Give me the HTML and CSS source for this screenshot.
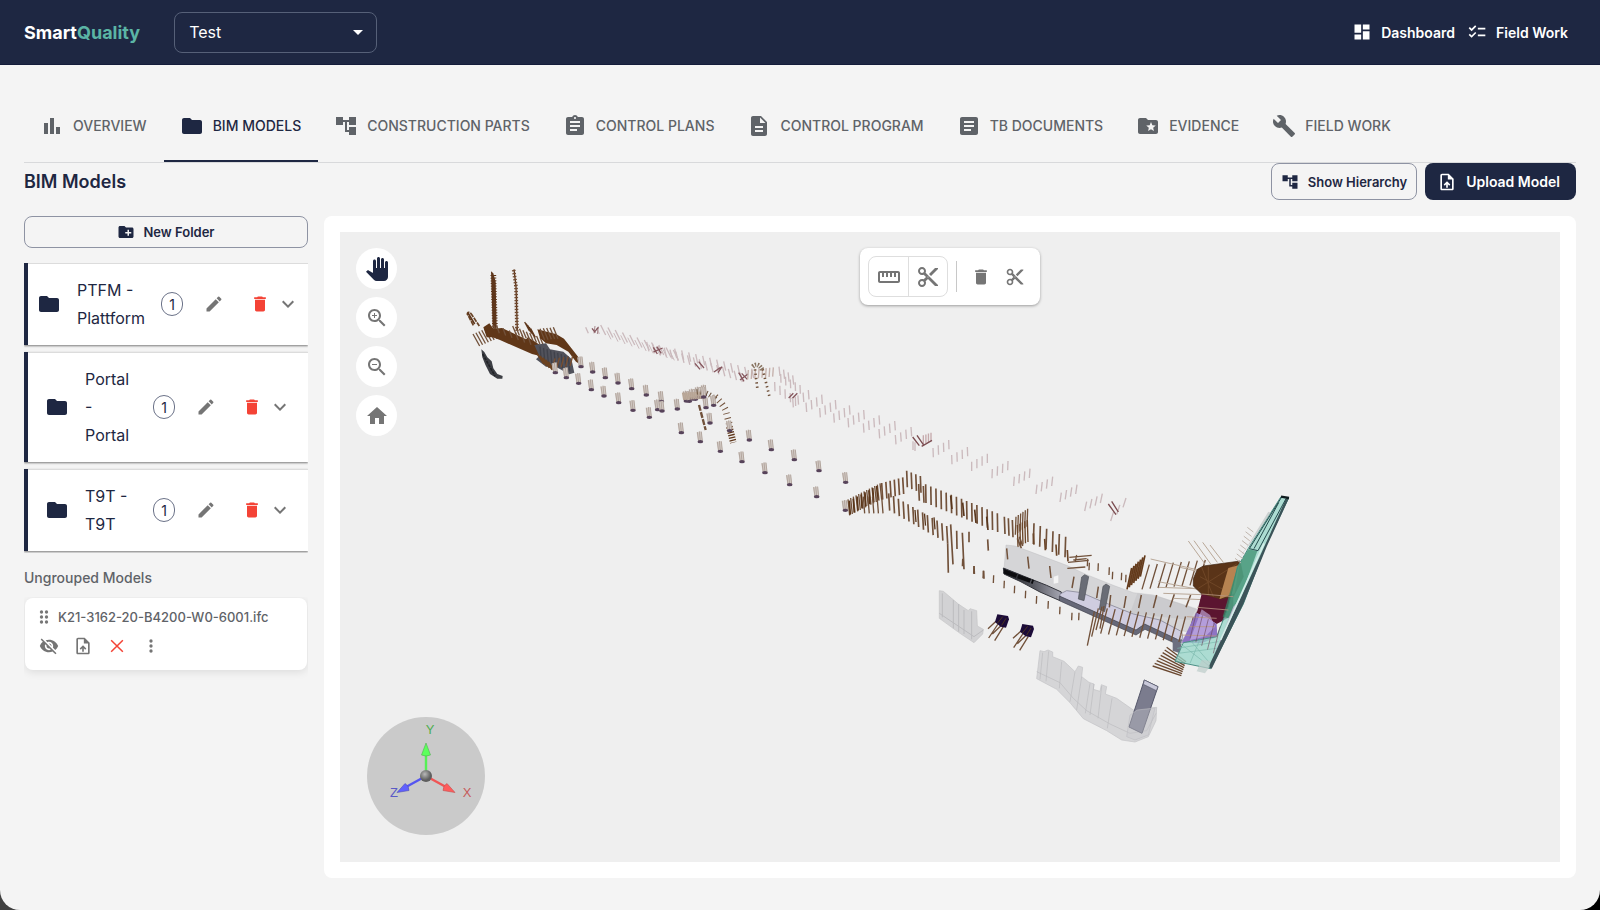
FILE: index.html
```html
<!DOCTYPE html>
<html lang="en">
<head>
<meta charset="utf-8">
<meta name="viewport" content="width=device-width, initial-scale=1">
<title>SmartQuality – BIM Models</title>
<link rel="stylesheet" href="styles.css">
</head>
<body>
<svg class="sprite" aria-hidden="true">
  <symbol id="i-bars" viewBox="0 0 24 24"><path d="M4 9h4v11H4zM16 13h4v7h-4zM10 4h4v16h-4z"/></symbol>
  <symbol id="i-folder" viewBox="0 0 24 24"><path d="M10 4H4c-1.1 0-1.99.9-1.99 2L2 18c0 1.1.9 2 2 2h16c1.1 0 2-.9 2-2V8c0-1.1-.9-2-2-2h-8z"/></symbol>
  <symbol id="i-tree" viewBox="0 0 24 24"><path d="M22 11V3h-7v3H9V3H2v8h7V8h2v10h4v3h7v-8h-7v3h-2V8h2v3z"/></symbol>
  <symbol id="i-assign" viewBox="0 0 24 24"><path d="M19 3h-4.18C14.4 1.84 13.3 1 12 1c-1.3 0-2.4.84-2.82 2H5c-1.1 0-2 .9-2 2v14c0 1.1.9 2 2 2h14c1.1 0 2-.9 2-2V5c0-1.1-.9-2-2-2m-7 0c.55 0 1 .45 1 1s-.45 1-1 1-1-.45-1-1 .45-1 1-1m2 14H7v-2h7zm3-4H7v-2h10zm0-4H7V7h10z"/></symbol>
  <symbol id="i-doc" viewBox="0 0 24 24"><path d="M14 2H6c-1.1 0-1.99.9-1.99 2L4 20c0 1.1.89 2 1.99 2H18c1.1 0 2-.9 2-2V8zm2 16H8v-2h8zm0-4H8v-2h8zm-3-5V3.5L18.5 9z"/></symbol>
  <symbol id="i-article" viewBox="0 0 24 24"><path d="M19 3H5c-1.1 0-2 .9-2 2v14c0 1.1.9 2 2 2h14c1.1 0 2-.9 2-2V5c0-1.1-.9-2-2-2m-5 14H7v-2h7zm3-4H7v-2h10zm0-4H7V7h10z"/></symbol>
  <symbol id="i-star" viewBox="0 0 24 24"><path d="M20 6h-8l-2-2H4c-1.1 0-1.99.9-1.99 2L2 18c0 1.1.9 2 2 2h16c1.1 0 2-.9 2-2V8c0-1.1-.9-2-2-2m-2.06 11L15 15.28 12.06 17l.78-3.33-2.59-2.24 3.41-.29L15 8l1.34 3.14 3.41.29-2.59 2.24z"/></symbol>
  <symbol id="i-build" viewBox="0 0 24 24"><path d="m22.7 19-9.1-9.1c.9-2.3.4-5-1.5-6.9-2-2-5-2.4-7.4-1.3L9 6 6 9 1.6 4.7C.4 7.1.9 10.1 2.9 12.1c1.9 1.9 4.6 2.4 6.9 1.5l9.1 9.1c.4.4 1 .4 1.4 0l2.3-2.3c.5-.4.5-1.1.1-1.4"/></symbol>
  <symbol id="i-dash" viewBox="0 0 24 24"><path d="M3 13h8V3H3zm0 8h8v-6H3zm10 0h8V11h-8zm0-18v6h8V3z"/></symbol>
  <symbol id="i-check" viewBox="0 0 24 24"><path d="M22 7h-9v2h9zm0 8h-9v2h9zM5.54 11 2 7.46l1.41-1.41 2.12 2.12 4.24-4.24 1.41 1.41zm0 8L2 15.46l1.41-1.41 2.12 2.12 4.24-4.24 1.41 1.41z"/></symbol>
  <symbol id="i-upload" viewBox="0 0 24 24"><path d="M14 2H6c-1.1 0-1.99.9-1.99 2L4 20c0 1.1.89 2 1.99 2H18c1.1 0 2-.9 2-2V8zm4 18H6V4h7v5h5zM8 15.01l1.41 1.41L11 14.84V19h2v-4.16l1.59 1.59L16 15.01 12.01 11z"/></symbol>
  <symbol id="i-newfolder" viewBox="0 0 24 24"><path d="M20 6h-8l-2-2H4c-1.11 0-1.99.89-1.99 2L2 18c0 1.11.89 2 2 2h16c1.11 0 2-.89 2-2V8c0-1.11-.89-2-2-2m-1 8h-3v3h-2v-3h-3v-2h3V9h2v3h3z"/></symbol>
  <symbol id="i-edit" viewBox="0 0 24 24"><path d="M3 17.25V21h3.75L17.81 9.94l-3.75-3.75zM20.71 7.04c.39-.39.39-1.02 0-1.41l-2.34-2.34a.996.996 0 0 0-1.41 0l-1.83 1.83 3.75 3.75z"/></symbol>
  <symbol id="i-delete" viewBox="0 0 24 24"><path d="M6 19c0 1.1.9 2 2 2h8c1.1 0 2-.9 2-2V7H6zM19 4h-3.5l-1-1h-5l-1 1H5v2h14z"/></symbol>
  <symbol id="i-more" viewBox="0 0 24 24"><path d="M16.59 8.59 12 13.17 7.41 8.59 6 10l6 6 6-6z"/></symbol>
  <symbol id="i-drag" viewBox="0 0 24 24"><circle cx="9" cy="6" r="2"/><circle cx="9" cy="12" r="2"/><circle cx="9" cy="18" r="2"/><circle cx="15" cy="6" r="2"/><circle cx="15" cy="12" r="2"/><circle cx="15" cy="18" r="2"/></symbol>
  <symbol id="i-hidden" viewBox="0 0 24 24"><path d="M12 7c2.76 0 5 2.24 5 5 0 .65-.13 1.26-.36 1.83l2.92 2.92c1.51-1.26 2.7-2.89 3.43-4.75-1.73-4.39-6-7.5-11-7.5-1.4 0-2.74.25-3.98.7l2.16 2.16C10.74 7.13 11.35 7 12 7M2 4.27l2.28 2.28.46.46C3.08 8.3 1.78 10.02 1 12c1.73 4.39 6 7.5 11 7.5 1.55 0 3.03-.3 4.38-.84l.42.42L19.73 22 21 20.73 3.27 3zM7.53 9.8l1.55 1.55c-.05.21-.08.43-.08.65 0 1.66 1.34 3 3 3 .22 0 .44-.03.65-.08l1.55 1.55c-.67.33-1.41.53-2.2.53-2.76 0-5-2.24-5-5 0-.79.2-1.53.53-2.2m4.31-.78 3.15 3.15.02-.16c0-1.66-1.34-3-3-3z"/></symbol>
  <symbol id="i-close" viewBox="0 0 24 24"><path d="M5 5l14 14M19 5L5 19" fill="none" stroke="currentColor" stroke-width="1.8"/></symbol>
  <symbol id="i-dots" viewBox="0 0 24 24"><circle cx="12" cy="6" r="2"/><circle cx="12" cy="12" r="2"/><circle cx="12" cy="18" r="2"/></symbol>
  <symbol id="i-hand" viewBox="0 0 24 24"><path d="M23 5.5V20c0 2.2-1.8 4-4 4h-7.3c-1.08 0-2.1-.43-2.85-1.19L1 14.83s1.26-1.23 1.3-1.25c.22-.19.49-.29.79-.29.22 0 .42.06.6.16.04.01 4.31 2.46 4.31 2.46V4c0-.83.67-1.5 1.5-1.5S11 3.17 11 4v7h1V1.5c0-.83.67-1.5 1.5-1.5S15 .67 15 1.5V11h1V2.5c0-.83.67-1.5 1.5-1.5s1.5.67 1.5 1.5V11h1V5.5c0-.83.67-1.5 1.5-1.5s1.5.67 1.5 1.5"/></symbol>
  <symbol id="i-zoomin" viewBox="0 0 24 24"><path d="M15.5 14h-.79l-.28-.27C15.41 12.59 16 11.11 16 9.5 16 5.91 13.09 3 9.5 3S3 5.91 3 9.5 5.91 16 9.5 16c1.61 0 3.09-.59 4.23-1.57l.27.28v.79l5 4.99L20.49 19zm-6 0C7.01 14 5 11.99 5 9.5S7.01 5 9.5 5 14 7.01 14 9.5 11.99 14 9.5 14M12 10h-2v2H9v-2H7V9h2V7h1v2h2z"/></symbol>
  <symbol id="i-zoomout" viewBox="0 0 24 24"><path d="M15.5 14h-.79l-.28-.27C15.41 12.59 16 11.11 16 9.5 16 5.91 13.09 3 9.5 3S3 5.91 3 9.5 5.91 16 9.5 16c1.61 0 3.09-.59 4.23-1.57l.27.28v.79l5 4.99L20.49 19zm-6 0C7.01 14 5 11.99 5 9.5S7.01 5 9.5 5 14 7.01 14 9.5 11.99 14 9.5 14M7 9h5v1H7z"/></symbol>
  <symbol id="i-home" viewBox="0 0 24 24"><path d="M10 20v-6h4v6h5v-8h3L12 3 2 12h3v8z"/></symbol>
  <symbol id="i-ruler" viewBox="0 0 24 24"><path d="M21 6H3c-1.1 0-2 .9-2 2v8c0 1.1.9 2 2 2h18c1.1 0 2-.9 2-2V8c0-1.1-.9-2-2-2m0 10H3V8h2v4h2V8h2v4h2V8h2v4h2V8h2v4h2V8h2z"/></symbol>
  <symbol id="i-cut" viewBox="0 0 24 24"><path d="M9.64 7.64c.23-.5.36-1.05.36-1.64 0-2.21-1.79-4-4-4S2 3.79 2 6s1.79 4 4 4c.59 0 1.14-.13 1.64-.36L10 12l-2.36 2.36C7.14 14.13 6.59 14 6 14c-2.21 0-4 1.79-4 4s1.79 4 4 4 4-1.79 4-4c0-.59-.13-1.14-.36-1.64L12 14l7 7h3v-1zM6 8c-1.1 0-2-.89-2-2s.9-2 2-2 2 .89 2 2-.9 2-2 2m0 12c-1.1 0-2-.89-2-2s.9-2 2-2 2 .89 2 2-.9 2-2 2m6-7.5c-.28 0-.5-.22-.5-.5s.22-.5.5-.5.5.22.5.5-.22.5-.5.5M19 3l-6 6 2 2 7-7V3z"/></symbol>
</svg>

<div class="window">
<header class="topbar">
  <a class="brand" href="#">Smart<span class="brand-accent">Quality</span></a>
  <div class="project">
    <select class="project-select" aria-label="Project"><option>Test</option></select>
    <svg class="project-arrow" viewBox="0 0 10 5" aria-hidden="true"><path d="M0 0l5 5 5-5z"/></svg>
  </div>
  <nav class="topnav">
    <a class="topnav-link" href="#"><svg class="icon s20"><use href="#i-dash"/></svg>Dashboard</a>
    <a class="topnav-link" href="#"><svg class="icon s20"><use href="#i-check"/></svg>Field Work</a>
  </nav>
</header>

<main class="page">
  <nav class="tabs">
    <a class="tab" href="#"><svg class="icon s24"><use href="#i-bars"/></svg>OVERVIEW</a>
    <a class="tab tab-active" href="#" aria-current="page"><svg class="icon s24"><use href="#i-folder"/></svg>BIM MODELS</a>
    <a class="tab" href="#"><svg class="icon s24"><use href="#i-tree"/></svg>CONSTRUCTION PARTS</a>
    <a class="tab" href="#"><svg class="icon s24"><use href="#i-assign"/></svg>CONTROL PLANS</a>
    <a class="tab" href="#"><svg class="icon s24"><use href="#i-doc"/></svg>CONTROL PROGRAM</a>
    <a class="tab" href="#"><svg class="icon s24"><use href="#i-article"/></svg>TB DOCUMENTS</a>
    <a class="tab" href="#"><svg class="icon s24"><use href="#i-star"/></svg>EVIDENCE</a>
    <a class="tab" href="#"><svg class="icon s24"><use href="#i-build"/></svg>FIELD WORK</a>
  </nav>

  <div class="heading">
    <h1 class="title">BIM Models</h1>
    <button class="btn btn-outline" type="button"><svg class="icon s18"><use href="#i-tree"/></svg>Show Hierarchy</button>
    <button class="btn btn-solid" type="button"><svg class="icon s20"><use href="#i-upload"/></svg>Upload Model</button>
  </div>

  <div class="workspace">
    <aside class="sidebar">
      <button class="new-folder" type="button"><svg class="icon s18"><use href="#i-newfolder"/></svg>New Folder</button>
      <div class="folders">
        <section class="folder">
          <svg class="icon s24"><use href="#i-folder"/></svg>
          <span class="folder-name">PTFM - Plattform</span>
          <span class="count">1</span>
          <button class="tool grey" type="button" aria-label="Rename folder"><svg class="icon s20"><use href="#i-edit"/></svg></button>
          <span class="folder-end"><button class="tool red" type="button" aria-label="Delete folder"><svg class="icon s20"><use href="#i-delete"/></svg></button><button class="toggle grey" type="button" aria-label="Expand folder"><svg class="icon s24"><use href="#i-more"/></svg></button></span>
        </section>
        <section class="folder">
          <svg class="icon s24"><use href="#i-folder"/></svg>
          <span class="folder-name">Portal - Portal</span>
          <span class="count">1</span>
          <button class="tool grey" type="button" aria-label="Rename folder"><svg class="icon s20"><use href="#i-edit"/></svg></button>
          <span class="folder-end"><button class="tool red" type="button" aria-label="Delete folder"><svg class="icon s20"><use href="#i-delete"/></svg></button><button class="toggle grey" type="button" aria-label="Expand folder"><svg class="icon s24"><use href="#i-more"/></svg></button></span>
        </section>
        <section class="folder">
          <svg class="icon s24"><use href="#i-folder"/></svg>
          <span class="folder-name">T9T - T9T</span>
          <span class="count">1</span>
          <button class="tool grey" type="button" aria-label="Rename folder"><svg class="icon s20"><use href="#i-edit"/></svg></button>
          <span class="folder-end"><button class="tool red" type="button" aria-label="Delete folder"><svg class="icon s20"><use href="#i-delete"/></svg></button><button class="toggle grey" type="button" aria-label="Expand folder"><svg class="icon s24"><use href="#i-more"/></svg></button></span>
        </section>
      </div>
      <h2 class="subtitle">Ungrouped Models</h2>
      <div class="clip">
        <article class="model">
          <div class="model-name"><svg class="icon s20 grey"><use href="#i-drag"/></svg>K21-3162-20-B4200-W0-6001.ifc</div>
          <div class="model-tools">
            <button class="mini grey" type="button" aria-label="Hide model"><svg class="icon s20"><use href="#i-hidden"/></svg></button>
            <button class="mini grey" type="button" aria-label="Upload new version"><svg class="icon s20"><use href="#i-upload"/></svg></button>
            <button class="mini red" type="button" aria-label="Remove model"><svg class="icon s20"><use href="#i-close"/></svg></button>
            <button class="mini grey" type="button" aria-label="More actions"><svg class="icon s20"><use href="#i-dots"/></svg></button>
          </div>
        </article>
      </div>
    </aside>

    <section class="viewer">
      <div class="canvas">
        <svg class="scene" id="scene" viewBox="340 232 1220 630" role="img" aria-label="3D model view"></svg>
        <div class="view-tools">
          <button class="round navy" type="button" aria-label="Pan"><svg class="icon s24"><use href="#i-hand"/></svg></button>
          <button class="round grey" type="button" aria-label="Zoom in"><svg class="icon s24"><use href="#i-zoomin"/></svg></button>
          <button class="round grey" type="button" aria-label="Zoom out"><svg class="icon s24"><use href="#i-zoomout"/></svg></button>
          <button class="round grey" type="button" aria-label="Home view"><svg class="icon s24"><use href="#i-home"/></svg></button>
        </div>
        <div class="toolbar">
          <div class="toolgroup">
            <button class="groupbtn grey" type="button" aria-label="Measure"><svg class="icon s24"><use href="#i-ruler"/></svg></button>
            <button class="groupbtn grey" type="button" aria-label="Section"><svg class="icon s24"><use href="#i-cut"/></svg></button>
          </div>
          <span class="divider"></span>
          <button class="barbtn grey" type="button" aria-label="Delete measurements"><svg class="icon s20"><use href="#i-delete"/></svg></button>
          <button class="barbtn grey" type="button" aria-label="Delete sections"><svg class="icon s20"><use href="#i-cut"/></svg></button>
        </div>
        <svg class="gizmo" viewBox="0 0 120 120" role="img" aria-label="Axes">
          <defs><radialGradient id="ball" cx=".4" cy=".35"><stop offset="0" stop-color="#b8b8b8"/><stop offset="1" stop-color="#5e5e5e"/></radialGradient></defs>
          <circle cx="60" cy="60" r="59" fill="#cacaca"/>
          <g stroke-width="2.4" stroke-linecap="round"><path d="M60 60V40" stroke="#55f055"/><path d="M60 60l20 11" stroke="#f05555"/><path d="M60 60l-20 11" stroke="#5555f0"/></g>
          <path d="M60 27l4.500 12q-4.500 2-9 0z" fill="#5cff5c" stroke="#50b050" stroke-width=".6"/>
          <path d="M89 76.500l-12-2q0-5 4-7z" fill="#ff5c5c" stroke="#c05050" stroke-width=".6"/>
          <path d="M31 76.500l12-2q0-5-4-7z" fill="#6060ff" stroke="#5050b0" stroke-width=".6"/>
          <circle cx="60" cy="60" r="6" fill="url(#ball)"/>
          <text class="axis axis-y" x="64" y="18">Y</text>
          <text class="axis axis-x" x="101" y="81">X</text>
          <text class="axis axis-z" x="28" y="81">Z</text>
        </svg>
      </div>
    </section>
  </div>
</main>
</div>
<script src="scene.js"></script>
</body>
</html>
```

FILE: styles.css
```css
* { box-sizing: border-box; }
html { background: linear-gradient(90deg, #404040 50%, #000 50%); }
body { margin: 0; font-family: Inter, "Liberation Sans", sans-serif; color: #1e2742; }
button, select { font-family: inherit; color: inherit; }
button { border: 0; background: none; padding: 0; cursor: pointer; }
a { color: inherit; text-decoration: none; }
.sprite { display: none; }
.icon { display: block; flex: none; fill: currentColor; }
.s18 { width: 18px; height: 18px; }
.s20 { width: 20px; height: 20px; }
.s24 { width: 24px; height: 24px; }
.grey { color: #757575; }
.red { color: #f44336; }
.navy { color: #1e2742; }

.window { min-height: 100vh; display: flex; flex-direction: column; background: #f4f4f4; border-radius: 0 0 20px 20px; overflow: hidden; }

.topbar { display: flex; align-items: center; height: 65px; padding: 0 32px 0 24px; background: #1e2742; border-bottom: 1px solid #141c3a; color: #fff; }
.brand { font-size: 18px; font-weight: 700; margin-right: 34px; }
.brand-accent { color: #5bb5a5; }
.project { display: grid; align-items: center; }
.project-select { grid-area: 1 / 1; appearance: none; width: 203px; height: 41px; padding: 0 14px; border: 1px solid #566078; border-radius: 8px; background: transparent; color: #fff; font-size: 16px; }
.project-arrow { grid-area: 1 / 1; justify-self: end; width: 10px; height: 5px; margin-right: 14px; fill: #fff; pointer-events: none; }
.topnav { display: flex; gap: 12px; margin-left: auto; }
.topnav-link { display: flex; align-items: center; gap: 9px; font-size: 14px; font-weight: 600; }

.page { flex: 1; display: flex; flex-direction: column; padding: 24px 24px 32px; }
.tabs { display: flex; border-bottom: 1px solid #d8d9db; }
.tab { display: flex; align-items: center; gap: 9px; height: 73px; padding: 0 17px 0 16px; color: #5f6368; font-size: 14px; font-weight: 500; white-space: nowrap; }
.tab-active { color: #1e2742; box-shadow: inset 0 -2px 0 #1e2742; }

.heading { display: flex; align-items: center; gap: 8px; margin-bottom: 16px; }
.title { flex: 1; margin: 0; font-size: 18px; font-weight: 600; }
.btn { display: flex; align-items: center; gap: 9px; height: 37px; border-radius: 8px; font-weight: 600; }
.btn-outline { padding: 0 9px; border: 1px solid #8e93a3; font-size: 13px; }
.btn-solid { padding: 0 16px 0 12px; background: #1e2742; color: #fff; font-size: 14px; }

.workspace { flex: 1; display: flex; gap: 16px; }
.sidebar { width: 284px; flex: none; display: flex; flex-direction: column; }
.new-folder { display: flex; align-items: center; justify-content: center; gap: 8px; height: 32px; border: 1px solid #8e93a3; border-radius: 8px; font-size: 13px; font-weight: 600; }
.folders { display: grid; grid-template-columns: minmax(0, 1fr); gap: 7px; margin-top: 15px; overflow: hidden; padding-bottom: 2px; }
.folder { display: flex; align-items: center; justify-content: center; gap: 16px; padding: 13px 15px 13px 17px; border-left: 4px solid #1e2742; background: #fff; box-shadow: 0 1px 2px rgba(0, 0, 0, .5), inset 0 1px 0 #dcdcdc; }
.folder-name { flex: 1 1 0; font-size: 16px; line-height: 28px; }
.folder-end { display: flex; align-items: center; }
.count { display: grid; place-items: center; flex: none; width: 22px; height: 24px; border: 1px solid #6b7288; border-radius: 12px; font-size: 14px; }
.tool { display: grid; place-items: center; flex: none; width: 30px; height: 30px; }
.toggle { display: grid; place-items: center; flex: none; width: 26px; height: 30px; }
.subtitle { margin: 15px 0 9px; font-size: 14px; line-height: 20px; font-weight: 500; color: #5f6368; }
.clip { overflow: hidden; padding: 1px 1px 12px; }
.model { padding: 8px 10px 12px; border-radius: 8px; background: #fff; box-shadow: 0 2px 8px rgba(0, 0, 0, .1); }
.model-name { display: flex; align-items: center; gap: 4px; height: 22px; margin-left: -1px; font-size: 13px; font-weight: 500; color: #5f6368; }
.model-tools { display: flex; gap: 6px; margin-top: 6px; }
.mini { display: grid; place-items: center; width: 28px; height: 24px; }

.viewer { flex: 1; display: flex; padding: 16px; border-radius: 8px; background: #fff; }
.canvas { flex: 1; position: relative; background: #efefef; overflow: hidden; }
.scene { position: absolute; inset: 0; width: 100%; height: 100%; }
.view-tools { position: absolute; left: 16px; top: 16px; display: grid; gap: 8px; }
.round { display: grid; place-items: center; width: 41px; height: 41px; border-radius: 50%; background: #fff; }
.toolbar { position: absolute; top: 16px; left: 50%; transform: translateX(-50%); display: flex; align-items: center; height: 57px; padding: 8px; border-radius: 8px; background: #fff; box-shadow: 0 1px 3px rgba(0, 0, 0, .35); }
.toolgroup { display: flex; border: 1px solid #dedede; border-radius: 8px; }
.groupbtn { display: grid; place-items: center; width: 39px; height: 39px; }
.groupbtn + .groupbtn { border-left: 1px solid #dedede; }
.divider { width: 1px; height: 31px; margin: 0 7px 0 8px; background: #c8c8c8; }
.barbtn { display: grid; place-items: center; width: 34px; height: 34px; }
.gizmo { position: absolute; left: 26px; bottom: 26px; width: 120px; height: 120px; }
.axis { font-family: "Liberation Sans", sans-serif; font-size: 13px; text-anchor: middle; }
.axis-y { fill: #4fae4f; }
.axis-x { fill: #c65a5a; }
.axis-z { fill: #5a5ac6; }
```

FILE: scene.js
```js
const scene = document.getElementById('scene');
const NS = 'http://www.w3.org/2000/svg';
const BROWN = '#71513a';
const PINK = '#cbbabd';

function el(parent, name, attrs) {
  const node = document.createElementNS(NS, name);
  for (const key in attrs) node.setAttribute(key, attrs[key]);
  parent.appendChild(node);
  return node;
}

// Each area is drawn on a grid three times finer than the view.
function area(x, y) {
  return el(scene, 'g', { transform: `translate(${x} ${y}) scale(${1 / 3})` });
}
function poly(g, points, fill, stroke, width) {
  return el(g, 'polygon', { points, fill, stroke: stroke || 'none', 'stroke-width': width || 2, 'stroke-linejoin': 'round' });
}
function line(g, d, stroke, width, dash) {
  return el(g, 'path', { d, fill: 'none', stroke, 'stroke-width': width, 'stroke-dasharray': dash || 'none' });
}
// A row of n sticks whose tops run from a to b.
function row(g, ax, ay, bx, by, n, dx, dy, color, width) {
  let d = '';
  for (let i = 0; i < n; i++) {
    const t = n > 1 ? i / (n - 1) : 0;
    d += `M${ax + (bx - ax) * t} ${ay + (by - ay) * t}l${dx} ${dy}`;
  }
  line(g, d, color, width);
}
function sticks(g, list, color, width) {
  line(g, list.map(([a, b, c, e]) => `M${a} ${b}L${c} ${e}`).join(''), color, width);
}
// Pile group with a dark cap at its foot.
function pile(g, x, y) {
  y -= 2;
  poly(g, `${x - 10},${y - 30} ${x + 4},${y - 34} ${x + 8},${y - 4} ${x - 6},${y - 4}`, '#d3cbc6');
  line(g, `M${x - 8} ${y - 32}L${x - 4} ${y - 4}M${x - 2} ${y - 34}L${x + 1} ${y - 4}M${x + 4} ${y - 33}L${x + 7} ${y - 4}`, '#b3a69e', 3);
  el(g, 'ellipse', { cx: x + 1, cy: y - 3, rx: 8.5, ry: 5, fill: '#57435a' });
}

/* ---- west area ---- */
const w = area(440, 250);
poly(w, '153,64 160,70 167,95 170,236 158,236 155,130', '#5e361b');
line(w, 'M160 75L165 235', '#5e361b', 17, '3 5');
line(w, 'M222 58L228 110L232 240', '#5e361b', 4);
line(w, 'M221 60L228 110L231 242', '#70492f', 11, '4 5');
line(w, 'M100 226L82 192Q84 182 94 192L118 228', '#684225', 5, '14 3');
line(w, 'M104 222L84 189', '#5e361b', 5);
row(w, 99, 252, 160, 226, 8, 20, 36, BROWN, 4);
poly(w, '130,232 148,220 160,236 186,234 258,268 264,262 305,288 330,345 345,360 325,352 300,318 276,312 180,270 158,262 140,262', '#603718');
row(w, 170, 228, 265, 262, 6, 8, 22, BROWN, 4);
row(w, 218, 228, 300, 262, 9, 10, 24, BROWN, 4);
row(w, 254, 216, 272, 236, 5, 14, 26, '#5e361b', 4);
poly(w, '292,238 320,245 348,252 372,266 392,292 420,328 424,345 408,335 385,305 350,285 318,280 300,264', '#603718');
row(w, 300, 236, 340, 232, 5, 14, 34, BROWN, 4);
poly(w, '283,285 318,280 330,298 370,305 394,326 403,368 388,373 350,352 318,350 288,328 298,318', '#51525b');
row(w, 300, 290, 385, 320, 9, 4, 44, '#40424b', 4);
row(w, 292, 312, 325, 335, 5, 20, 30, '#6b4220', 5);
row(w, 345, 325, 398, 318, 5, -8, 30, '#7a4f30', 4);
poly(w, '124,298 133,306 142,322 155,334 160,355 172,372 188,378 187,386 172,386 150,372 136,344 127,322', '#3c3e44');
line(w, 'M128 312L165 378', '#202226', 5, '9 3');

row(w, 437, 232, 470, 234, 2, 8, 18, PINK, 4);
row(w, 482, 225, 700, 300, 11, 15, 30, PINK, 4);
row(w, 465, 228, 475, 230, 2, -3, 22, '#a98a8e', 3);
row(w, 500, 242, 690, 305, 10, 13, 26, PINK, 3);
row(w, 620, 276, 900, 368, 17, 7, 28, PINK, 4);
row(w, 704, 296, 935, 356, 12, 6, 28, PINK, 4);
sticks(w, [[456, 235, 466, 248], [475, 232, 465, 244], [640, 292, 652, 312], [650, 290, 664, 310], [668, 294, 640, 306], [765, 340, 780, 358], [776, 335, 792, 354], [822, 366, 842, 352], [834, 368, 846, 350], [896, 368, 912, 394], [905, 370, 922, 388], [900, 390, 924, 372]], '#85565d', 4);
row(w, 925, 360, 1000, 352, 8, -2, 28, '#c5b0ab', 4);
row(w, 1017, 350, 1058, 376, 4, 3, 28, PINK, 4);
row(w, 1004, 396, 1066, 440, 5, 1, 28, PINK, 4);
row(w, 1022, 372, 1080, 405, 5, 1, 26, PINK, 4);
sticks(w, [[1046, 444, 1060, 430], [1056, 446, 1072, 430]], '#85565d', 4);
line(w, 'M938 350Q955 335 968 362', '#87725f', 14, '4 4');
line(w, 'M945 358L952 415', BROWN, 8, '4 9');
line(w, 'M968 358L988 438', BROWN, 8, '4 9');

for (let i = 0; i < 7; i++) pile(w, 738 + i * 9, 458 - i * 3 + (i % 2) * 4);
row(w, 728, 428, 790, 424, 12, 4, 22, '#b8a595', 5);
line(w, 'M770 426Q800 422 826 448', '#6a533e', 16, '3 7');
line(w, 'M826 440Q848 462 856 478L870 530', BROWN, 20, '3 12');
line(w, 'M868 530L880 578', '#5e361b', 20, '4 4');
line(w, 'M777 465L797 540', BROWN, 7, '18 4');
[[345, 373], [378, 388], [415, 405], [453, 424], [491, 443], [535, 463], [578, 486], [627, 507], [723, 553], [780, 580], [840, 609], [905, 640], [974, 673], [1048, 709], [1129, 745], [1215, 786],
 [422, 355], [457, 371], [495, 388], [533, 404], [574, 421], [618, 440], [663, 459], [711, 482], [652, 484], [665, 488], [797, 478], [820, 471], [809, 524], [868, 547], [790, 446], [927, 575], [993, 604], [1062, 634], [1136, 667], [1216, 702]].forEach(([x, y]) => pile(w, x, y));

/* ---- middle area ---- */
const m = area(780, 330);
[[38, 204, 0], [78, 218, 0], [119, 234, 0], [161, 250, 0], [204, 264, 0], [250, 280, 0], [297, 297, 0], [346, 315, 0], [458, 354, 1], [514, 375, 1], [573, 395, 2], [634, 417, 3], [699, 440, 4], [766, 464, 5], [838, 488, 6], [912, 515, 8]].forEach(([x, y, lean]) => {
  row(m, x + lean, y, x + lean + 47, y - 24, 4, 2 - lean, 28, PINK, 4);
});
row(m, 399, 334, 405, 337, 2, 0, 26, PINK, 4);
row(m, 430, 316, 453, 308, 4, 0, 26, '#c5a9ab', 4);
row(m, 1001, 545, 1038, 504, 3, -9, 28, PINK, 4);
sticks(m, [[398, 321, 418, 347], [411, 316, 430, 344], [425, 349, 456, 331], [985, 522, 1008, 554], [995, 514, 1015, 546]], '#7b4c50', 4);

row(m, 204, 508, 300, 460, 13, 5, 48, BROWN, 4);
row(m, 208, 512, 290, 468, 8, 3, 42, '#5a3518', 5);
row(m, 250, 500, 305, 500, 5, 4, 50, BROWN, 4);
row(m, 305, 459, 368, 442, 6, 3, 50, '#735038', 5);
row(m, 380, 422, 421, 438, 4, 2, 50, BROWN, 5);
row(m, 416, 462, 430, 468, 2, 2, 50, BROWN, 5);
row(m, 437, 463, 652, 550, 15, 1, 56, BROWN, 5);
row(m, 326, 490, 500, 588, 13, 3, 52, BROWN, 5);
row(m, 512, 497, 620, 560, 4, 4, 40, '#59361c', 5);
row(m, 405, 540, 462, 562, 3, 3, 36, '#59361c', 4);
row(m, 673, 560, 697, 570, 3, 2, 52, BROWN, 5);
row(m, 708, 560, 743, 536, 6, -2, 54, BROWN, 4);
row(m, 712, 585, 742, 570, 5, 2, 66, '#6b4528', 4);
row(m, 762, 580, 857, 620, 6, -2, 62, BROWN, 5);
row(m, 760, 610, 862, 660, 4, 2, 34, '#6b4528', 5);
sticks(m, [[503, 640, 505, 728], [512, 583, 519, 703], [530, 602, 531, 657], [547, 608, 552, 718], [567, 605, 567, 637], [623, 628, 625, 662], [582, 708, 583, 732], [611, 722, 612, 746], [712, 625, 724, 655], [718, 620, 728, 648]], BROWN, 5);

/* ---- east area ---- */
const e = area(900, 480);
const defs = el(scene, 'defs', {});
const grad = el(defs, 'linearGradient', { id: 'slab', x1: 0, x2: 1 });
el(grad, 'stop', { offset: 0, 'stop-color': '#16171b' });
el(grad, 'stop', { offset: .5, 'stop-color': '#55565e' });
el(grad, 'stop', { offset: 1, 'stop-color': '#a5a6b2' });

poly(e, '318,195 345,198 500,256 560,284 640,316 700,338 760,345 890,388 885,460 740,432 620,388 470,340 312,268', 'rgba(204,204,207,.75)', 'rgba(180,180,184,.5)');
poly(e, '690,400 712,340 780,350 890,385 870,420 780,410', 'rgba(185,185,190,.35)');
poly(e, '461,290 475,286 475,308 461,311', '#f4f4f4');
poly(e, '310,264 370,288 440,316 484,336 480,362 420,336 360,304 312,282', 'url(#slab)', '#34353c', 3);
line(e, 'M312 274L400 306', '#0d0d10', 12, '40 4');
poly(e, '480,342 500,332 545,338 600,362 700,402 780,420 845,455 850,482 830,480 732,434 708,452 480,350', '#cfcde0', '#77778a', 2);
poly(e, '478,348 708,450 734,432 832,478 830,492 735,448 708,465 478,362', '#666878', '#3e404c', 2);
poly(e, '818,480 846,478 840,520 818,512', '#6c6f80');
poly(e, '545,291 554,284 566,290 552,362 535,357', '#6a6d76', '#4f5158');
poly(e, '609,319 618,312 629,319 614,395 598,388', '#6a6d76', '#4f5158');

sticks(e, [[320, 205, 323, 238], [383, 230, 387, 266], [449, 258, 453, 294], [522, 290, 516, 324], [595, 320, 590, 354], [632, 345, 628, 382], [678, 348, 672, 384], [724, 345, 716, 384], [770, 345, 760, 384], [823, 343, 810, 382], [872, 345, 858, 382]], BROWN, 4.5);
[[188, 236], [222, 258], [250, 272], [281, 286], [313, 302], [344, 317], [377, 332], [410, 348], [445, 363], [480, 380], [516, 398], [537, 398], [563, 236], [595, 250], [628, 262], [638, 275], [665, 278], [678, 284], [568, 248]].forEach(([x, y]) => line(e, `M${x} ${y}l-1 23`, BROWN, 4));
sticks(e, [[508, 232, 575, 226], [520, 240, 560, 236], [504, 247, 566, 241], [502, 265, 556, 261], [530, 225, 526, 244]], BROWN, 4);
row(e, 735, 226, 695, 264, 7, -14, 64, '#633a1b', 5);
row(e, 748, 254, 916, 240, 8, -22, 74, BROWN, 4);
sticks(e, [[583, 395, 562, 497], [595, 385, 575, 470], [606, 380, 588, 450], [612, 378, 600, 446]], BROWN, 4);
row(e, 622, 385, 880, 412, 12, -20, 76, BROWN, 4);
line(e, 'M752 237L895 270M775 305L895 328M776 322L890 326M790 340L965 346M820 355L930 360M840 262L920 280M865 183L915 252M882 182L932 252M908 187L952 247M930 195L970 247', '#b9a898', 3);
for (let i = 0; i < 8; i++) line(e, `M${800 - i * 6} ${502 + i * 8}L${858 - i * 2} ${545 + i * 6}`, '#6a4830', 4);

poly(e, '892,268 910,258 1020,243 1030,290 1000,350 960,368 905,342 880,318 880,296', '#5a3418', '#3d2210');
line(e, 'M905 262L940 350M895 325L1010 252M925 260L925 345M900 290L990 340', '#6f4626', 3);
poly(e, '985,264 1018,255 1004,340 958,358', '#b78351');
poly(e, '905,342 962,358 1000,350 1000,405 950,432 910,408 890,400', '#5b1530');
poly(e, '888,398 918,410 950,432 952,470 905,490 845,488', '#8e74c4');
poly(e, '905,388 930,405 945,440 915,470 870,480', 'rgba(205,185,235,.6)');
poly(e, '1143,50 1166,54 1096,200 1030,372 932,566 825,544 850,488 950,470 985,380 1012,262 1045,205', 'rgba(150,213,200,.75)', '#4c8f85', 3);
poly(e, '1105,95 1112,98 1052,190 1030,215 1020,235', 'rgba(190,196,196,.7)');
poly(e, '1012,262 1045,208 1072,213 1030,330 985,415 968,410', 'rgba(52,138,104,.7)');
poly(e, '1038,340 1020,372 960,500 945,520 1000,380', '#b9b6cc');
poly(e, '1160,52 1167,54 1100,200 1030,372 935,566 925,562 1014,372 1092,202', '#3b5358');
line(e, 'M1145 51L1048 206L1074 212L1158 56M1136 68L1062 206', '#244a4c', 3);
line(e, 'M1143 50L1167 54', '#101c20', 7);
line(e, 'M1092 190L962 480', '#d5efe9', 5);
line(e, 'M835 520L950 505M832 505L955 485M840 490L930 560M870 480L930 550M900 478L870 550', '#7ab8ac', 2);
poly(e, '905,540 930,542 928,562 915,580 890,574', 'rgba(190,205,203,.7)');
line(e, 'M905 342L1000 350M892 382L985 390M860 410L950 415M870 440L945 440M840 465L950 468', 'rgba(185,150,130,.8)', 3);
row(e, 890, 395, 960, 440, 5, -20, 80, 'rgba(110,70,90,.6)', 3);
row(e, 1042, 142, 1005, 235, 8, 18, 14, '#c0b6ae', 3);

poly(e, '118,332 130,334 175,372 205,392 210,386 230,392 232,438 250,448 248,462 222,488 180,460 118,415', 'rgba(205,205,207,.85)', '#c4c4c6');
line(e, 'M127 340V412M160 360V445M176 372V455M192 390V462M215 394V478M118 400L222 470L250 450', '#bcbcbf', 3);
poly(e, '420,512 432,515 444,510 458,516 458,530 492,544 525,575 535,558 548,562 545,590 566,606 570,608 582,612 580,628 600,634 604,614 620,620 616,642 650,655 700,690 770,682 768,722 745,770 705,786 665,780 620,752 550,716 510,668 470,628 410,596', 'rgba(208,208,210,.85)', '#c2c2c5');
line(e, 'M428 518L420 598M446 514L438 604M485 545L478 625M525 575L510 665M545 590L530 690M570 610L556 700M582 612L570 705M605 618L594 715M636 655L622 745M410 575L480 608L520 655L560 692L630 732L690 760L740 752L768 700', '#bbbbbe', 2);
poly(e, '733,600 774,620 726,760 687,741', '#7b7c8e', '#55576a', 3);
poly(e, '733,600 774,620 769,632 730,613', '#c9c9da', '#55576a', 2);
poly(e, '690,705 712,690 765,684 745,765 705,780 680,770', 'rgba(200,200,204,.4)', 'rgba(190,190,194,.9)');

[[0, 0], [75, 29]].forEach(([x, y]) => {
  sticks(e, [[288 + x, 424 + y, 264 + x, 446 + y], [294 + x, 432 + y, 266 + x, 474 + y], [302 + x, 438 + y, 277 + x, 462 + y], [310 + x, 440 + y, 284 + x, 482 + y]], BROWN, 4);
  poly(e, [[292, 403], [324, 408], [327, 418], [318, 443], [302, 440], [285, 426]].map(([a, b]) => `${a + x},${b + y}`).join(' '), '#1c0b38');
  line(e, `M${292 + x} ${430 + y}L${308 + x} ${410 + y}M${305 + x} ${436 + y}L${318 + x} ${415 + y}`, '#4a3420', 3);
});
```
